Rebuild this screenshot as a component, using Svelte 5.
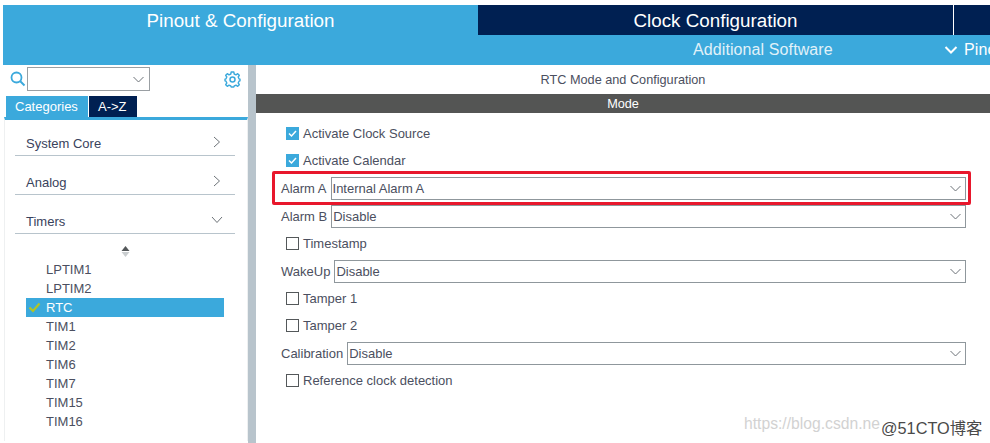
<script>
    const timers = ['LPTIM1', 'LPTIM2', 'RTC', 'TIM1', 'TIM2', 'TIM6', 'TIM7', 'TIM15', 'TIM16'];
    const selected = 'RTC';

    const rows = [
        { type: 'check', label: 'Activate Clock Source', checked: true },
        { type: 'check', label: 'Activate Calendar', checked: true },
        { type: 'select', label: 'Alarm A', value: 'Internal Alarm A' },
        { type: 'select', label: 'Alarm B', value: 'Disable' },
        { type: 'check', label: 'Timestamp' },
        { type: 'select', label: 'WakeUp', value: 'Disable' },
        { type: 'check', label: 'Tamper 1' },
        { type: 'check', label: 'Tamper 2' },
        { type: 'select', label: 'Calibration', value: 'Disable' },
        { type: 'check', label: 'Reference clock detection' }
    ];
</script>

<div class="page">
    <div class="tabs">
        <div class="tab active">Pinout &amp; Configuration</div>
        <div class="tab">Clock Configuration</div>
        <div class="tab end"></div>
    </div>
    <div class="subbar">
        <span class="additional">Additional Software</span>
        <span class="pinout">
            <svg width="14" height="10" viewBox="0 0 14 10"><path d="M1.5 2 L7 7.5 L12.500 2" fill="none" stroke="#fff" stroke-width="2"/></svg>
            <span>Pinout</span>
        </span>
    </div>

    <div class="body">
        <aside class="side">
            <div class="search">
                <svg class="lens" width="16" height="16" viewBox="0 0 16 16"><circle cx="6.500" cy="6.500" r="5" fill="none" stroke="#3ba9dc" stroke-width="1.800"/><path d="M10 10 L14.500 14.500" stroke="#3ba9dc" stroke-width="2"/></svg>
                <div class="combo">
                    <svg width="11" height="7" viewBox="0 0 11 7"><path d="M0.500 1 L5.500 6 L10.500 1" fill="none" stroke="#6d7378" stroke-width="1"/></svg>
                </div>
                <svg class="gear" width="17" height="17" viewBox="0 0 17 17">
                    <circle cx="8.500" cy="8.500" r="2.500" fill="none" stroke="#3ba9dc" stroke-width="1.500"/>
                    <path d="M7.200 1 H9.800 L10.200 3 L12 3.800 L13.700 2.700 L15.300 4.300 L14.200 6 L15 7.800 L16 8.200 V9.800 L15 10.200 L14.200 12 L15.300 13.700 L13.700 15.300 L12 14.200 L10.200 15 L9.800 16 H7.200 L6.800 15 L5 14.200 L3.300 15.300 L1.700 13.700 L2.800 12 L2 10.200 L1 9.800 V8.200 L2 7.800 L2.800 6 L1.700 4.300 L3.300 2.700 L5 3.800 L6.800 3 Z" fill="none" stroke="#3ba9dc" stroke-width="1.400" stroke-linejoin="round"/>
                </svg>
            </div>
            <div class="side-tabs">
                <div class="side-tab on">Categories</div>
                <div class="side-tab az">A-&gt;Z</div>
            </div>
            <div class="tree">
                <div class="group">
                    <span>System Core</span>
                    <svg width="8" height="12" viewBox="0 0 8 12"><path d="M1 1 L6.500 6 L1 11" fill="none" stroke="#6d7378"/></svg>
                </div>
                <div class="group">
                    <span>Analog</span>
                    <svg width="8" height="12" viewBox="0 0 8 12"><path d="M1 1 L6.500 6 L1 11" fill="none" stroke="#6d7378"/></svg>
                </div>
                <div class="group">
                    <span>Timers</span>
                    <svg class="open" width="12" height="8" viewBox="0 0 12 8"><path d="M1 1 L6 6.500 L11 1" fill="none" stroke="#6d7378"/></svg>
                </div>
                <div class="sorter">
                    <svg width="9" height="11" viewBox="0 0 9 11"><path d="M4.500 0 L8.500 5 H0.500 Z" fill="#54585a"/><path d="M4.500 11 L8.500 6 H0.500 Z" fill="#c9cdcf"/></svg>
                </div>
                <ul>
                    {#each timers as t}
                        <li class:sel={t === selected}>
                            {#if t === selected}
                                <svg width="13" height="11" viewBox="0 0 13 11"><path d="M1.500 5.500 L5 9 L11.500 1.500" fill="none" stroke="#b3c524" stroke-width="2.200"/></svg>
                            {/if}
                            <span>{t}</span>
                        </li>
                    {/each}
                </ul>
            </div>
        </aside>
        <div class="splitter"></div>
        <main class="main">
            <div class="title">RTC Mode and Configuration</div>
            <div class="mode">Mode</div>
            <div class="form">
                {#each rows as r}
                    <div class="row" class:tall={r.type === 'select'}>
                        {#if r.type === 'check'}
                            <span class="box" class:checked={r.checked}>
                                {#if r.checked}
                                    <svg width="13" height="13" viewBox="0 0 13 13"><path d="M3 6.500 L5.500 9 L10 4" fill="none" stroke="#fff" stroke-width="1.500"/></svg>
                                {/if}
                            </span>
                            <span class="check-label">{r.label}</span>
                        {:else}
                            <span class="sel-label">{r.label}</span>
                            <div class="select">
                                <span>{r.value}</span>
                                <svg width="11" height="7" viewBox="0 0 11 7"><path d="M0.500 1 L5.500 6 L10.500 1" fill="none" stroke="#6d7378" stroke-width="1"/></svg>
                            </div>
                        {/if}
                    </div>
                {/each}
                <div class="highlight"></div>
            </div>
        </main>
    </div>
    <div class="mark"><span class="csdn">https://blog.csdn.ne</span><span class="cto">@51CTO博客</span></div>
</div>

<style>
    :global(body) {
        margin: 0;
        background: #fff;
    }

    .page {
        position: relative;
        width: 990px;
        height: 443px;
        overflow: hidden;
        box-sizing: border-box;
        padding: 5px 0 0 3px;
        font-family: "Liberation Sans", Arial, sans-serif;
        font-size: 13px;
        color: #4b4f60;
    }

    .tabs {
        display: flex;
        height: 30px;
    }

    .tab {
        width: 475px;
        background: #002052;
        color: #fff;
        font-size: 18.800px;
        line-height: 31px;
        text-align: center;
    }

    .tab.active {
        background: #3ba9dc;
    }

    .tab.end {
        width: 36px;
        border-left: 1px solid #fff;
    }

    .subbar {
        display: flex;
        align-items: center;
        height: 30px;
        background: #3ba9dc;
        color: #fff;
        font-size: 16px;
        letter-spacing: 0.1px;
    }

    .additional {
        flex: none;
        margin-left: 690px;
        width: 251px;
        opacity: 0.85;
    }

    .pinout {
        flex: none;
        display: flex;
        align-items: center;
        gap: 6px;
        white-space: nowrap;
    }

    .body {
        display: flex;
        height: 378px;
    }

    .side {
        width: 245px;
        flex: none;
    }

    .search {
        display: flex;
        align-items: center;
        height: 26px;
        margin-top: 1px;
        padding-left: 7px;
    }

    .lens {
        margin-right: 1px;
    }

    .combo {
        display: flex;
        align-items: center;
        justify-content: flex-end;
        box-sizing: border-box;
        width: 123px;
        height: 24px;
        padding-right: 5px;
        border: 1px solid #9a9fa3;
    }

    .gear {
        margin-left: 74px;
    }

    .side-tabs {
        display: flex;
        gap: 1px;
        margin: 4px 0 0 3px;
        height: 21px;
    }

    .side-tab {
        padding: 0 9px;
        background: #002052;
        color: #fff;
        line-height: 21px;
    }

    .side-tab.on {
        width: 64px;
        background: #3ba9dc;
    }

    .side-tab.az {
        width: 30px;
    }

    .tree {
        box-sizing: border-box;
        height: 324px;
        margin: 0 0 0 1px;
        padding: 16px 0 0 10px;
        border-top: 3px solid #3ba9dc;
        border-left: 1px solid #eef0f1;
        border-right: 1px solid #eef0f1;
    }

    .group {
        display: flex;
        align-items: flex-end;
        justify-content: space-between;
        box-sizing: border-box;
        width: 220px;
        height: 39px;
        padding: 0 14px 4px 11px;
        border-bottom: 1px solid #b8c4cc;
        color: #39425c;
    }

    .group:first-child {
        height: 20px;
    }

    .group svg {
        margin-bottom: 3px;
    }

    .group svg.open {
        margin-bottom: 5px;
        margin-right: -2px;
    }

    .sorter {
        display: flex;
        justify-content: center;
        width: 220px;
        margin-top: 12px;
        height: 14px;
    }

    ul {
        list-style: none;
        margin: 0 0 0 11px;
        padding: 0;
        width: 198px;
    }

    li {
        display: flex;
        align-items: center;
        height: 19px;
        padding-left: 20px;
        position: relative;
    }

    li.sel {
        background: #3ba9dc;
        color: #fff;
    }

    li svg {
        position: absolute;
        left: 2px;
        top: 4px;
    }

    .splitter {
        width: 8px;
        flex: none;
        background: #b8c4cc;
    }

    .main {
        flex: 1;
        min-width: 0;
    }

    .title {
        height: 29px;
        padding-top: 1px;
        box-sizing: border-box;
        font-size: 12.700px;
        line-height: 29px;
        text-align: center;
    }

    .mode {
        height: 19px;
        background: #545554;
        color: #fff;
        font-size: 12.700px;
        line-height: 20px;
        text-align: center;
    }

    .form {
        position: relative;
        padding: 7px 0 0 25px;
    }

    .row {
        display: flex;
        align-items: center;
        height: 27px;
        width: 685px;
    }

    .row.tall {
        height: 28px;
    }

    .box {
        box-sizing: border-box;
        width: 13px;
        height: 13px;
        margin-left: 5px;
        margin-right: 4px;
        border: 1px solid #54585a;
    }

    .box.checked {
        border: none;
        background: #3ba9dc;
    }

    .box svg {
        display: block;
    }

    .sel-label {
        margin-right: 4px;
    }

    .select {
        flex: 1;
        display: flex;
        align-items: center;
        justify-content: space-between;
        box-sizing: border-box;
        height: 23px;
        padding: 0 4px 0 1px;
        border: 1px solid #8f979c;
    }

    .highlight {
        position: absolute;
        left: 16px;
        top: 58px;
        width: 699px;
        height: 34px;
        box-sizing: border-box;
        border: 3px solid #e8172c;
        border-radius: 2px;
    }

    .mark {
        position: absolute;
        left: 744px;
        top: 415px;
        display: flex;
        font-family: "Liberation Sans", "Noto Sans CJK SC", sans-serif;
        font-size: 15.700px;
        white-space: nowrap;
    }

    .csdn {
        width: 137px;
        overflow: hidden;
        color: #d2d2d2;
    }

    .cto {
        color: #4a4a4a;
        font-size: 16.300px;
    }
</style>
